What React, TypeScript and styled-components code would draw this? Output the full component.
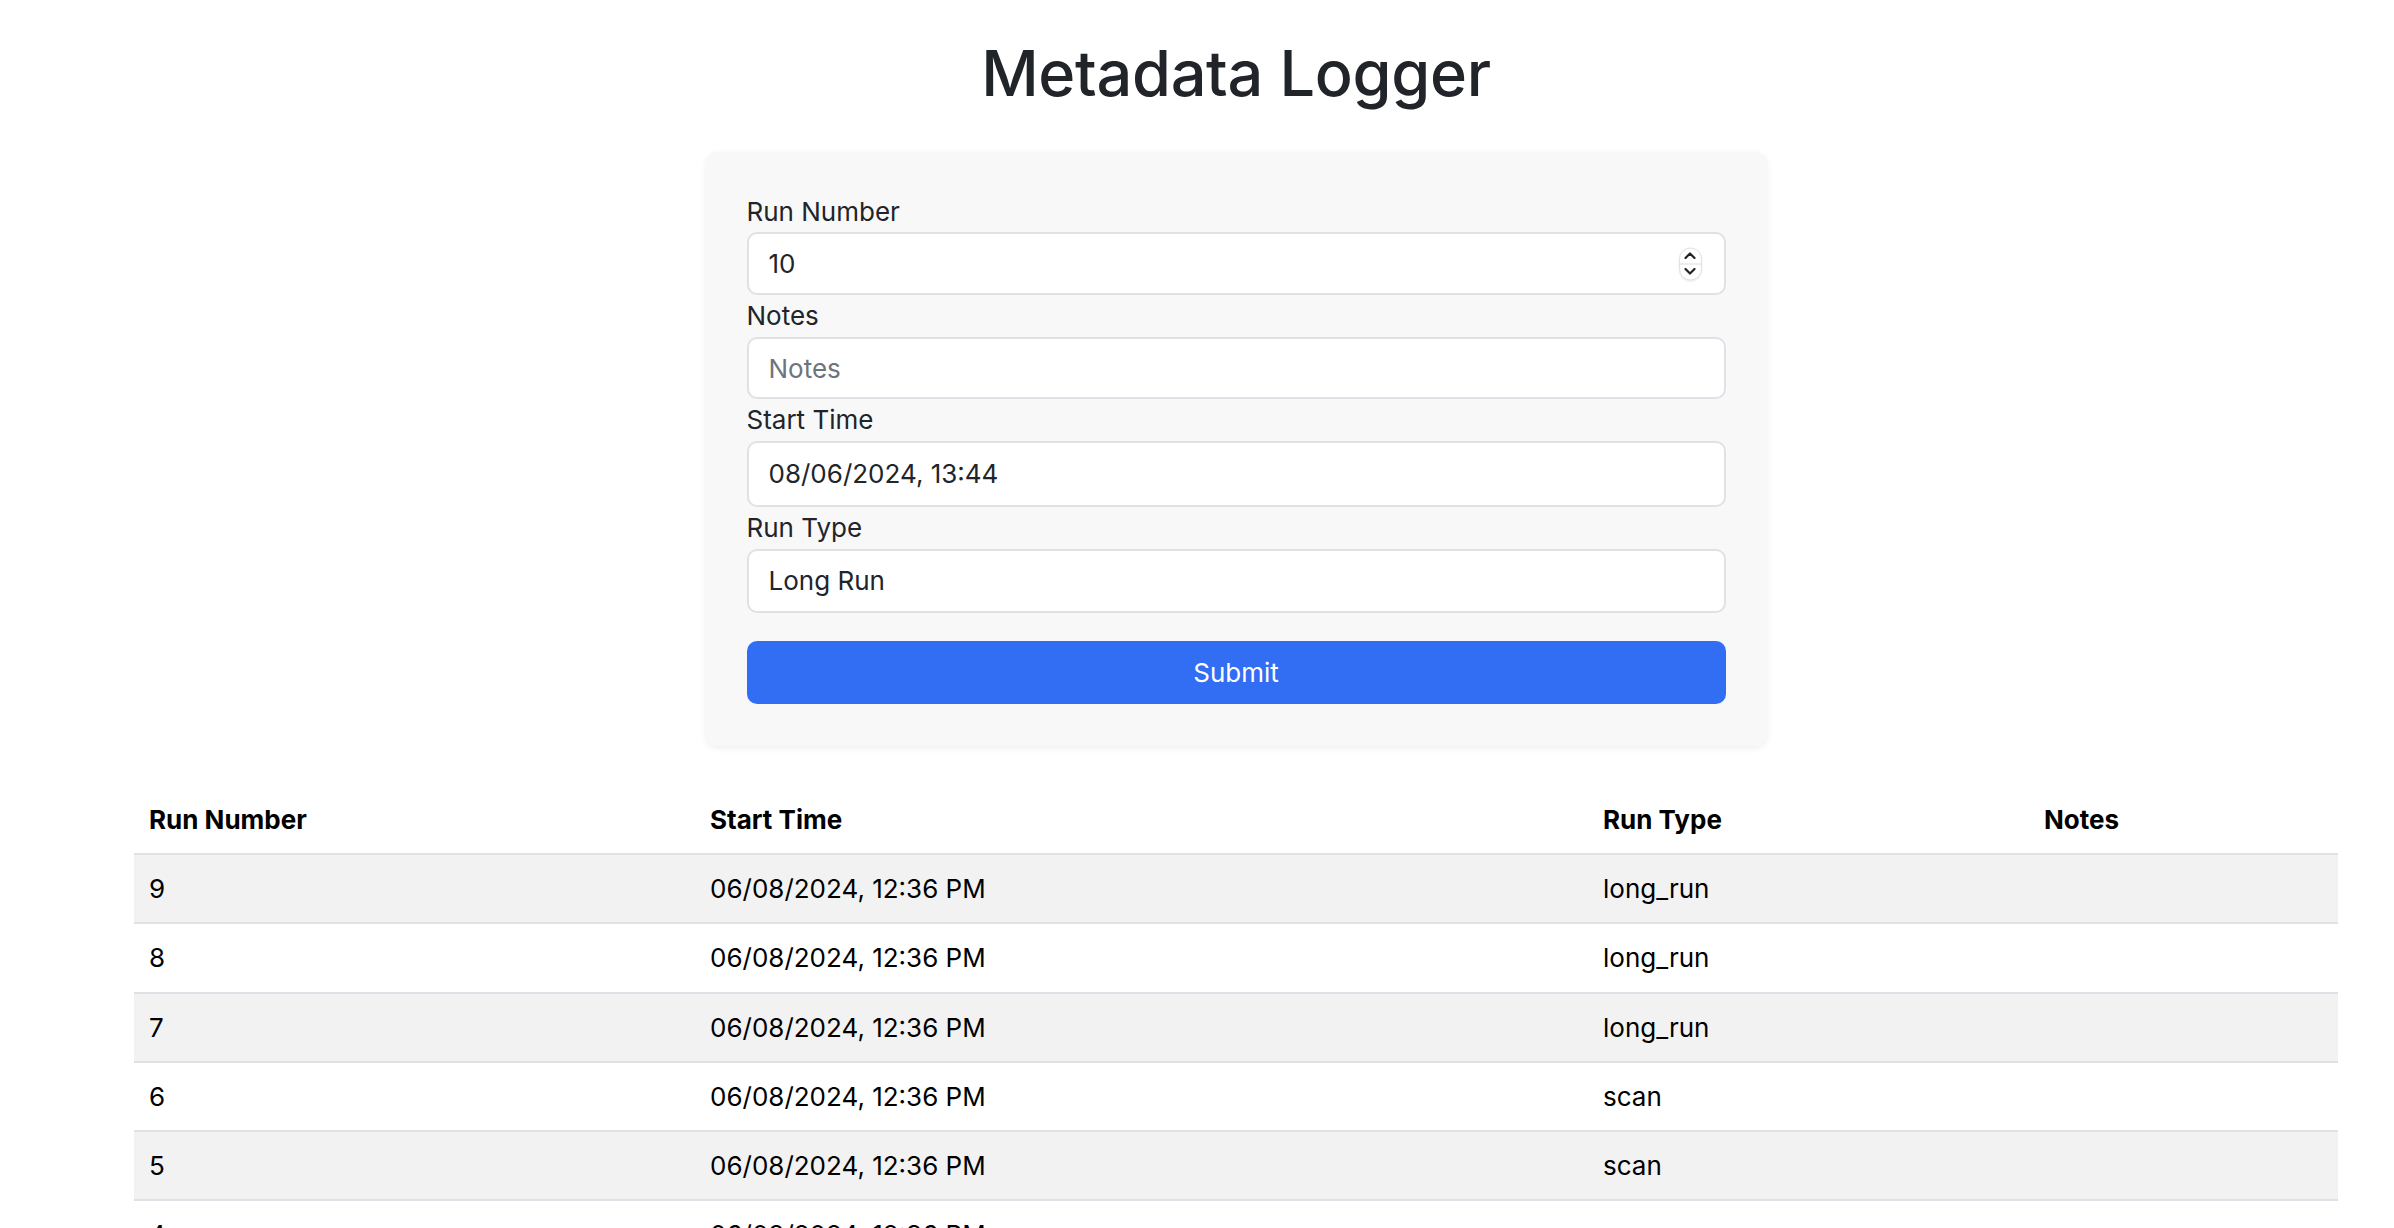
import React from "react";
import styled, { createGlobalStyle } from "styled-components";

const GlobalStyle = createGlobalStyle`
  *, *::before, *::after { box-sizing: border-box; }
  html, body { margin: 0; padding: 0; background: #ffffff; }
  body {
    font-family: Inter, "Noto Sans", "Liberation Sans", sans-serif;
    color: #212529;
    -webkit-font-smoothing: antialiased;
  }
`;

const Page = styled.main`
  display: flex;
  flex-direction: column;
  align-items: center;
  padding: 35px 56px 0 134px;
`;

const Title = styled.h1`
  margin: 0 0 40px;
  font-size: 63px;
  font-weight: 500;
  line-height: 77px;
  color: #212529;
  letter-spacing: -0.3px;
`;

const Card = styled.form`
  width: 1061px;
  display: flex;
  flex-direction: column;
  padding: 38.5px 41px 42.5px;
  background: #f8f8f8;
  border-radius: 12px;
  box-shadow: 0 2px 7px rgba(0, 0, 0, 0.07);
`;

const Label = styled.label`
  display: block;
  font-size: 26px;
  line-height: 41.8px;
  color: #212529;
`;

const Field = styled.div`
  position: relative;
`;

const Input = styled.input<{ $h: number }>`
  display: block;
  width: 100%;
  height: ${(p) => p.$h}px;
  padding: 0 22px 0 20px;
  border: 2px solid #dee2e6;
  border-radius: 10px;
  background: #ffffff;
  font-family: inherit;
  font-size: 26px;
  color: #212529;
  outline: none;
  &::placeholder {
    color: #6c757d;
  }
`;

const Spinner = styled.div`
  position: absolute;
  right: 24px;
  top: 50%;
  transform: translateY(-50%);
  width: 23px;
  height: 33px;
  display: flex;
  flex-direction: column;
  border-radius: 12px;
  border: 1px solid #e2e2e2;
  background: #ffffff;
  box-shadow: 0 1px 2px rgba(0, 0, 0, 0.08);
  overflow: hidden;
`;

const SpinHalf = styled.div<{ $top?: boolean }>`
  flex: 1;
  display: flex;
  align-items: center;
  justify-content: center;
  border-bottom: ${(p) => (p.$top ? "1px solid #dcdcdc" : "none")};
`;

const SubmitButton = styled.button`
  margin-top: 28px;
  height: 63px;
  border: none;
  border-radius: 10px;
  background: #326ef4;
  color: #ffffff;
  font-family: inherit;
  font-size: 26px;
  cursor: pointer;
`;

const Table = styled.table`
  align-self: stretch;
  margin-top: 40px;
  border-collapse: collapse;
  table-layout: fixed;
  width: 100%;
`;

const HeadCell = styled.th`
  text-align: left;
  padding: 14px 15px;
  font-size: 26px;
  line-height: 39px;
  font-weight: 700;
  color: #000000;
  border-bottom: 2px solid #dee2e6;
`;

const Row = styled.tr<{ $striped: boolean }>`
  background: ${(p) => (p.$striped ? "#f2f2f2" : "#ffffff")};
`;

const Cell = styled.td`
  padding: 14.1px 15px;
  font-size: 26px;
  line-height: 39px;
  color: #000000;
  border-bottom: 2px solid #dee2e6;
`;

const Chevron = ({ up }: { up?: boolean }) => (
  <svg width="12" height="8" viewBox="0 0 12 8" fill="none">
    <path
      d={up ? "M1.5 6.5 L6 2 L10.5 6.5" : "M1.5 1.5 L6 6 L10.5 1.5"}
      stroke="#222"
      strokeWidth="2.2"
      strokeLinecap="round"
      strokeLinejoin="round"
    />
  </svg>
);

const runs = [
  { n: 9, t: "06/08/2024, 12:36 PM", type: "long_run", notes: "" },
  { n: 8, t: "06/08/2024, 12:36 PM", type: "long_run", notes: "" },
  { n: 7, t: "06/08/2024, 12:36 PM", type: "long_run", notes: "" },
  { n: 6, t: "06/08/2024, 12:36 PM", type: "scan", notes: "" },
  { n: 5, t: "06/08/2024, 12:36 PM", type: "scan", notes: "" },
  { n: 4, t: "06/08/2024, 12:36 PM", type: "scan", notes: "" },
  { n: 3, t: "06/08/2024, 12:36 PM", type: "scan", notes: "" },
  { n: 2, t: "06/08/2024, 12:36 PM", type: "scan", notes: "" },
  { n: 1, t: "06/08/2024, 12:36 PM", type: "scan", notes: "" },
];

export default function App() {
  return (
    <>
      <GlobalStyle />
      <Page>
        <Title>Metadata Logger</Title>
        <Card onSubmit={(e) => e.preventDefault()}>
          <Label htmlFor="run">Run Number</Label>
          <Field>
            <Input id="run" $h={63} type="text" defaultValue="10" />
            <Spinner>
              <SpinHalf $top>
                <Chevron up />
              </SpinHalf>
              <SpinHalf>
                <Chevron />
              </SpinHalf>
            </Spinner>
          </Field>
          <Label htmlFor="notes">Notes</Label>
          <Input id="notes" $h={62} type="text" placeholder="Notes" />
          <Label htmlFor="start">Start Time</Label>
          <Input id="start" $h={66} type="text" defaultValue="08/06/2024, 13:44" />
          <Label htmlFor="type">Run Type</Label>
          <Input id="type" $h={64} type="text" defaultValue="Long Run" />
          <SubmitButton type="submit">Submit</SubmitButton>
        </Card>
        <Table>
          <colgroup>
            <col style={{ width: 561 }} />
            <col style={{ width: 893 }} />
            <col style={{ width: 441 }} />
            <col />
          </colgroup>
          <thead>
            <tr>
              <HeadCell>Run Number</HeadCell>
              <HeadCell>Start Time</HeadCell>
              <HeadCell>Run Type</HeadCell>
              <HeadCell>Notes</HeadCell>
            </tr>
          </thead>
          <tbody>
            {runs.map((r, i) => (
              <Row key={r.n} $striped={i % 2 === 0}>
                <Cell>{r.n}</Cell>
                <Cell>{r.t}</Cell>
                <Cell>{r.type}</Cell>
                <Cell>{r.notes}</Cell>
              </Row>
            ))}
          </tbody>
        </Table>
      </Page>
    </>
  );
}
